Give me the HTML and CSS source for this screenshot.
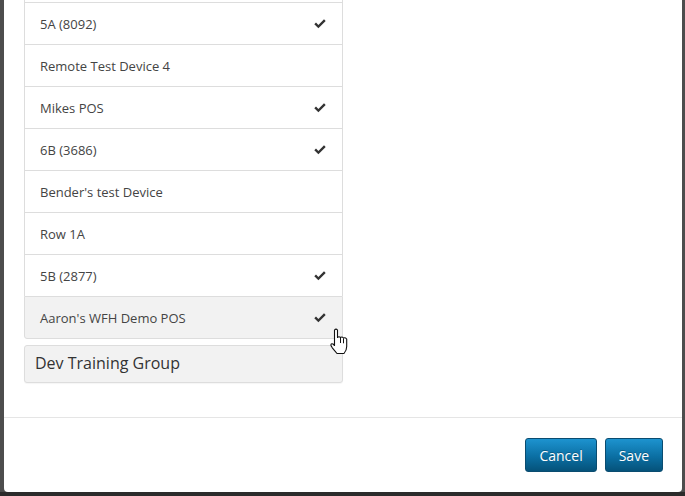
FILE: index.html
```html
<!DOCTYPE html>
<html>
<head>
<meta charset="utf-8">
<link rel="stylesheet" href="styles.css">
</head>
<body>
<div class="backdrop">
  <div class="modal">
    <div class="modal-body">
      <ul class="list-group">
        <li class="list-item"></li>
        <li class="list-item"><span>5A (8092)</span><svg class="check" viewBox="0 0 12 10"><path d="M0.3 5.2 L2 3.5 L4.4 5.9 L10 0.3 L11.7 2 L4.4 9.3 Z"/></svg></li>
        <li class="list-item"><span>Remote Test Device 4</span></li>
        <li class="list-item"><span>Mikes POS</span><svg class="check" viewBox="0 0 12 10"><path d="M0.3 5.2 L2 3.5 L4.4 5.9 L10 0.3 L11.7 2 L4.4 9.3 Z"/></svg></li>
        <li class="list-item"><span>6B (3686)</span><svg class="check" viewBox="0 0 12 10"><path d="M0.3 5.2 L2 3.5 L4.4 5.9 L10 0.3 L11.7 2 L4.4 9.3 Z"/></svg></li>
        <li class="list-item"><span>Bender's test Device</span></li>
        <li class="list-item"><span>Row 1A</span></li>
        <li class="list-item"><span>5B (2877)</span><svg class="check" viewBox="0 0 12 10"><path d="M0.3 5.2 L2 3.5 L4.4 5.9 L10 0.3 L11.7 2 L4.4 9.3 Z"/></svg></li>
        <li class="list-item hover"><span>Aaron's WFH Demo POS</span><svg class="check" viewBox="0 0 12 10"><path d="M0.3 5.2 L2 3.5 L4.4 5.9 L10 0.3 L11.7 2 L4.4 9.3 Z"/></svg>
          <svg class="cursor" viewBox="0 0 19 27"><path d="M4.5 2 Q6 0.3 7.5 2 V9.5 Q9 8 10.5 9.5 Q12 8.3 13.5 10 Q15.2 9.2 16.7 11 V18.5 Q16.7 22.5 14 25.5 H7 Q5 23 2.3 19.8 L1 17.6 Q0.6 15.2 3 16 L4.5 17.5 Z" fill="#fff" stroke="#111" stroke-width="1.1" stroke-linejoin="round"/><path d="M10.5 9.8 V15 M13.5 10.3 V15.3" stroke="#111" stroke-width="1"/></svg>
        </li>
      </ul>
      <div class="group-panel">Dev Training Group</div>
    </div>
    <div class="modal-footer">
      <button class="btn">Cancel</button>
      <button class="btn">Save</button>
    </div>
  </div>
</div>
</body>
</html>
```
FILE: styles.css
```css
html, body {
  margin: 0;
  padding: 0;
  width: 685px;
  height: 496px;
  overflow: hidden;
  background: #2b2b2b;
}
.backdrop {
  height: 492px;
  background: #4d4d4d;
  overflow: hidden;
}
.modal {
  margin-top: -40px;
  margin-left: 4px;
  width: 678px;
  height: 532px;
  background: #fff;
  border-radius: 0 0 4px 4px;
  display: flex;
  flex-direction: column;
  font-family: "Open Sans", "Noto Sans", sans-serif;
}
.modal-body {
  padding: 0 20px 0 20px;
  height: 457px;
  flex: none;
  box-sizing: border-box;
}
.list-group {
  list-style: none;
  margin: 0;
  padding: 0;
  width: 319px;
  box-sizing: border-box;
}
.list-item {
  position: relative;
  display: flex;
  align-items: center;
  justify-content: space-between;
  height: 42px;
  box-sizing: border-box;
  padding: 0 15px;
  border: 1px solid #ddd;
  border-bottom: none;
  font-size: 13px;
  color: #444;
  background: #fff;
}
.list-item.hover {
  background: #f2f2f2;
  border-bottom: 1px solid #ddd;
  height: 43px;
  border-radius: 0 0 3px 3px;
}
.check {
  width: 12px;
  height: 10px;
  margin-right: 1px;
}
.check path { fill: #333; }
.cursor {
  position: absolute;
  left: 305px;
  top: 31px;
  width: 19px;
  height: 27px;
}
.group-panel {
  margin-top: 6px;
  width: 319px;
  height: 38px;
  box-sizing: border-box;
  border: 1px solid #ddd;
  border-radius: 3px;
  background: #f2f2f2;
  padding: 0 10px 3px;
  display: flex;
  align-items: center;
  font-size: 16px;
  color: #333;
  box-shadow: 0 1px 1px rgba(0,0,0,0.04);
}
.modal-footer {
  border-top: 1px solid #e5e5e5;
  padding: 20px 19px 20px 0;
  display: flex;
  justify-content: flex-end;
  gap: 8px;
}
.btn {
  height: 34px;
  padding: 0 13px;
  font-family: "Open Sans", "Noto Sans", sans-serif;
  font-size: 14px;
  color: #fff;
  border: 1px solid #0a4c70;
  border-radius: 3px;
  background: linear-gradient(to bottom, #1d93cf 0%, #0b6fa3 55%, #05527a 100%);
  text-shadow: 0 -1px 0 rgba(0,0,0,0.25);
}
```
